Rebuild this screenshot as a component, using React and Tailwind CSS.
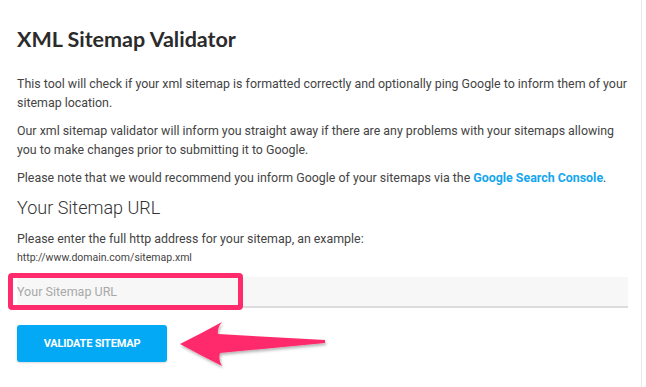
export default function App() {
  return (
    <div className="flex w-[646px] h-[387px] bg-white overflow-hidden">
      <div className="w-[642px] h-full border-r border-[#e8e8e8] pl-[17px] pr-[14px] font-['Roboto',sans-serif] text-[12.4px] leading-[19px] text-[#444]">
        <h1 className="mt-[28px] font-['Lato',sans-serif] font-bold text-[21.5px] leading-[22px] text-[#2b2b2b]">
          XML Sitemap Validator
        </h1>
        <p className="mt-[24px]">
          This tool will check if your xml sitemap is formatted correctly and optionally ping Google to inform them of your
          sitemap location.
        </p>
        <p className="mt-[9px]">
          Our xml sitemap validator will inform you straight away if there are any problems with your sitemaps allowing
          you to make changes prior to submitting it to Google.
        </p>
        <p className="mt-[9px]">
          Please note that we would recommend you inform Google of your sitemaps via the{" "}
          <a href="#" className="font-bold text-[#14a6ee]">Google Search Console</a>.
        </p>
        <h2 className="mt-[9px] font-light text-[18px] leading-[24px] text-[#333]">Your Sitemap URL</h2>
        <p className="mt-[9px]">Please enter the full http address for your sitemap, an example:</p>
        <p className="mt-[2px] text-[10.5px] leading-[16px]">http://www.domain.com/sitemap.xml</p>

        <div className="relative mt-[11px] w-[611px]">
          <input
            type="text"
            placeholder="Your Sitemap URL"
            className="w-full h-[31px] bg-[#f7f7f7] border-b-2 border-[#dcdcdc] text-[12.5px] placeholder:text-[#a8a8a8] outline-none"
          />
          <div className="absolute left-[-9px] top-[-4px] w-[235px] h-[37px] border-[5px] border-[#ff2b6c] rounded-[4px]"></div>
        </div>

        <div className="relative mt-[17px]">
          <button className="w-[150px] h-[37px] rounded-[3px] bg-[#03a9f4] text-white font-bold text-[11px] tracking-[-0.2px] shadow-[0_1px_2px_rgba(0,0,0,0.15)]">
            VALIDATE SITEMAP
          </button>
          <svg
            className="absolute left-[153px] top-[-9px]"
            width="165"
            height="55"
            viewBox="0 0 165 55"
          >
            <defs>
              <filter id="sh" x="-10%" y="-30%" width="120%" height="160%">
                <feDropShadow dx="1" dy="2" stdDeviation="1.5" floodColor="#000" floodOpacity="0.3" />
              </filter>
            </defs>
            <path
              d="M10 28 Q32 17 52 6 Q47 12 48 18 L155 24 L155 27 L50 37 Q48 44 52 50 Q30 39 10 28 Z"
              fill="#ff2b6c"
              filter="url(#sh)"
            />
          </svg>
        </div>
      </div>
    </div>
  );
}
